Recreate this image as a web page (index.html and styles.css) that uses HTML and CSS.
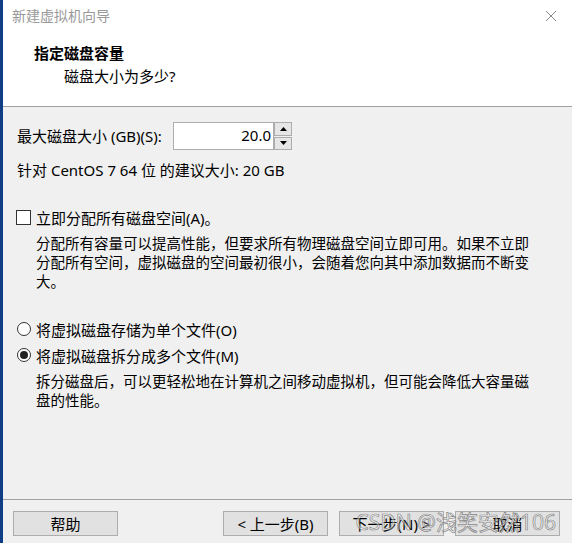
FILE: index.html
```html
<!DOCTYPE html>
<html lang="zh-CN">
<head>
<meta charset="utf-8">
<title>新建虚拟机向导</title>
<link rel="stylesheet" href="styles.css">
</head>
<body>
<div class="window">
  <div class="header">
    <div class="titlebar">
      <span class="title">新建虚拟机向导</span>
      <svg class="close" width="12" height="12" viewBox="0 0 12 12"><path d="M1 1 L11 11 M11 1 L1 11" stroke="#8a8a8a" stroke-width="1" fill="none"/></svg>
    </div>
    <div class="head-title">指定磁盘容量</div>
    <div class="head-sub">磁盘大小为多少?</div>
  </div>
  <div class="content">
    <div class="size-row">
      <span class="size-label">最大磁盘大小 (GB)(S):</span>
      <div class="spin">
        <div class="spin-input">20.0</div>
        <div class="spin-btns">
          <div class="spin-btn"><svg width="7" height="4" viewBox="0 0 7 4"><path d="M3.5 0 L7 4 L0 4 Z" fill="#000"/></svg></div>
          <div class="spin-btn"><svg width="7" height="4" viewBox="0 0 7 4"><path d="M0 0 L7 0 L3.5 4 Z" fill="#000"/></svg></div>
        </div>
      </div>
    </div>
    <div class="hint">针对 CentOS 7 64 位 的建议大小: 20 GB</div>
    <div class="option opt-check"><span class="checkbox"></span><span>立即分配所有磁盘空间(A)。</span></div>
    <p class="desc">分配所有容量可以提高性能，但要求所有物理磁盘空间立即可用。如果不立即<br>分配所有空间，虚拟磁盘的空间最初很小，会随着您向其中添加数据而不断变<br>大。</p>
    <div class="option opt-radio1"><span class="radio"></span><span>将虚拟磁盘存储为单个文件(O)</span></div>
    <div class="option opt-radio2"><span class="radio radio-on"></span><span>将虚拟磁盘拆分成多个文件(M)</span></div>
    <p class="desc">拆分磁盘后，可以更轻松地在计算机之间移动虚拟机，但可能会降低大容量磁<br>盘的性能。</p>
  </div>
  <div class="footer">
    <button class="btn">帮助</button>
    <div class="spacer"></div>
    <div class="nav">
      <button class="btn">&lt; 上一步(B)</button>
      <button class="btn">下一步(N) &gt;</button>
      <button class="btn">取消</button>
    </div>
    <div class="watermark">CSDN @浅笑安然106</div>
  </div>
</div>
</body>
</html>
```
FILE: styles.css
```css
* { box-sizing: border-box; }
html, body { margin: 0; padding: 0; }
body {
  width: 572px;
  height: 543px;
  overflow: hidden;
  background: #f0f0f0;
  font-family: "Noto Sans", "Noto Sans CJK SC", sans-serif;
  font-size: 15px;
  color: #000;
}
.window {
  height: 543px;
  border-left: 3px solid #0f3e86;
  display: flex;
  flex-direction: column;
  position: relative;
}
.header {
  background: #fff;
  height: 107px;
  border-bottom: 1px solid #a0a0a0;
}
.titlebar {
  height: 32px;
  display: flex;
  align-items: center;
  justify-content: space-between;
  padding: 0 15px 0 9px;
}
.title {
  color: #999;
  font-size: 14px;
  line-height: 20px;
}
.close { display: block; }
.head-title {
  margin-top: 10px;
  padding-left: 31px;
  font-weight: bold;
  line-height: 22px;
}
.head-sub {
  margin-top: 1px;
  padding-left: 61px;
  line-height: 22px;
}
.content {
  flex: 1;
  padding: 15px 14px 0 13px;
}
.size-row {
  display: flex;
  align-items: center;
  height: 28px;
}
.size-label {
  line-height: 20px;
  width: 157px;
  flex: none;
  padding-left: 1px;
  white-space: nowrap;
}
.spin {
  display: flex;
  height: 28px;
}
.spin-input {
  width: 101px;
  height: 28px;
  background: #fff;
  border: 1px solid #adadad;
  text-align: right;
  padding-right: 2px;
  line-height: 25px;
}
.spin-btns {
  display: flex;
  flex-direction: column;
  gap: 1px;
}
.spin-btn {
  width: 18px;
  height: 13.5px;
  background: #e6e6e6;
  border: 1px solid #adadad;
  display: flex;
  align-items: center;
  justify-content: center;
}
.spin-btn svg { display: block; }
.hint {
  margin-top: 10px;
  line-height: 20px;
  padding-left: 1px;
}
.option {
  display: flex;
  align-items: center;
  height: 20px;
  gap: 5px;
}
.opt-check { margin-top: 27px; }
.opt-radio1 { margin-top: 28px; }
.opt-radio2 { margin-top: 6px; }
.checkbox {
  width: 15px;
  height: 15px;
  border: 1px solid #333;
  background: #fff;
  flex: none;
}
.radio {
  width: 14px;
  height: 14px;
  border: 1px solid #333;
  border-radius: 50%;
  background: #fff;
  flex: none;
  margin-left: 1px;
  display: flex;
  align-items: center;
  justify-content: center;
}
.radio-on::after {
  content: "";
  width: 8px;
  height: 8px;
  border-radius: 50%;
  background: #222;
}
.desc {
  margin: 7px 0 0 0;
  padding-left: 20px;
  font-size: 14.5px;
  line-height: 19px;
  white-space: nowrap;
}
.footer {
  height: 44px;
  border-top: 1px solid #a0a0a0;
  display: flex;
  align-items: flex-start;
  padding: 11px 12px 0 10px;
  position: relative;
}
.spacer { flex: 1; }
.nav {
  display: flex;
  gap: 11px;
}
.btn {
  width: 105px;
  height: 25px;
  background: #e1e1e1;
  border: 1px solid #adadad;
  font-family: inherit;
  font-size: 15px;
  color: #000;
  padding: 0;
  line-height: 22px;
}
.watermark {
  position: absolute;
  right: 16px;
  top: 8px;
  font-size: 21px;
  line-height: 28px;
  color: rgba(255, 255, 255, 0.45);
  -webkit-text-stroke: 0.7px rgba(100, 100, 100, 0.75);
  font-family: "Noto Sans", "Noto Sans CJK SC", sans-serif;
  white-space: nowrap;
}
```
